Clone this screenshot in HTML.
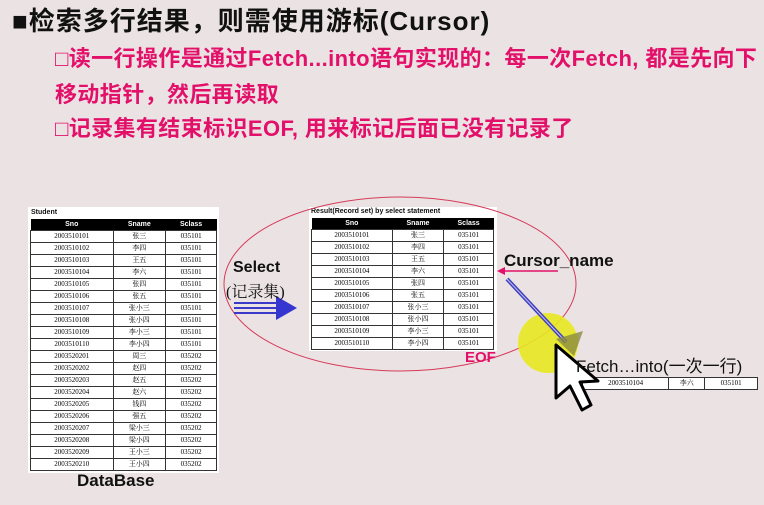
<!DOCTYPE html>
<html><head><meta charset="utf-8"><style>
body{margin:0;width:764px;height:505px;overflow:hidden;background:#ebe3e3;font-family:"Liberation Sans","Noto Sans CJK SC",sans-serif;position:relative}
.a{position:absolute;white-space:nowrap}
.r{color:#e3106a;font-weight:bold;font-size:22px;line-height:26px;letter-spacing:0.4px}
table{border-collapse:collapse;background:#fff;position:absolute;font-family:"Liberation Serif","Noto Serif CJK SC",serif;font-size:7px;text-align:center}
td{border:1px solid #333;padding:0;height:11px;line-height:11px}
th{background:#000;color:#fff;font-family:"Liberation Sans",sans-serif;font-size:7px;height:11px;padding:0}
.cap{position:absolute;font-size:7px;font-weight:bold;color:#111}
</style></head><body>
<div class="a" style="left:12px;top:5px;font-size:26px;line-height:32px;letter-spacing:1px;font-weight:bold;color:#111">■检索多行结果，则需使用游标(Cursor)</div>
<div class="a r" style="left:55px;top:46px">□读一行操作是通过Fetch...into语句实现的：每一次Fetch, 都是先向下</div>
<div class="a r" style="left:55px;top:82px">移动指针，然后再读取</div>
<div class="a r" style="left:55px;top:116px">□记录集有结束标识EOF, 用来标记后面已没有记录了</div>

<div style="position:absolute;left:28px;top:207px;width:191px;height:266px;background:#fff"></div>
<div class="cap" style="left:31px;top:209px">Student</div>
<table style="left:30px;top:219px;width:187px">
<tr><th>Sno</th><th>Sname</th><th>Sclass</th></tr>
<tr><td>2003510101</td><td>张三</td><td>035101</td></tr>
<tr><td>2003510102</td><td>李四</td><td>035101</td></tr>
<tr><td>2003510103</td><td>王五</td><td>035101</td></tr>
<tr><td>2003510104</td><td>李六</td><td>035101</td></tr>
<tr><td>2003510105</td><td>张四</td><td>035101</td></tr>
<tr><td>2003510106</td><td>张五</td><td>035101</td></tr>
<tr><td>2003510107</td><td>张小三</td><td>035101</td></tr>
<tr><td>2003510108</td><td>张小四</td><td>035101</td></tr>
<tr><td>2003510109</td><td>李小三</td><td>035101</td></tr>
<tr><td>2003510110</td><td>李小四</td><td>035101</td></tr>
<tr><td>2003520201</td><td>周三</td><td>035202</td></tr>
<tr><td>2003520202</td><td>赵四</td><td>035202</td></tr>
<tr><td>2003520203</td><td>赵五</td><td>035202</td></tr>
<tr><td>2003520204</td><td>赵六</td><td>035202</td></tr>
<tr><td>2003520205</td><td>钱四</td><td>035202</td></tr>
<tr><td>2003520206</td><td>强五</td><td>035202</td></tr>
<tr><td>2003520207</td><td>梁小三</td><td>035202</td></tr>
<tr><td>2003520208</td><td>梁小四</td><td>035202</td></tr>
<tr><td>2003520209</td><td>王小三</td><td>035202</td></tr>
<tr><td>2003520210</td><td>王小四</td><td>035202</td></tr>
</table>
<div class="a" style="left:77px;top:471px;font-size:17px;font-weight:bold;color:#111">DataBase</div>

<div style="position:absolute;left:309px;top:207px;width:188px;height:144px;background:#fff"></div>
<div class="cap" style="left:311px;top:208px">Result(Record set) by select statement</div>
<table style="left:311px;top:218px;width:183px">
<tr><th>Sno</th><th>Sname</th><th>Sclass</th></tr>
<tr><td>2003510101</td><td>张三</td><td>035101</td></tr>
<tr><td>2003510102</td><td>李四</td><td>035101</td></tr>
<tr><td>2003510103</td><td>王五</td><td>035101</td></tr>
<tr><td>2003510104</td><td>李六</td><td>035101</td></tr>
<tr><td>2003510105</td><td>张四</td><td>035101</td></tr>
<tr><td>2003510106</td><td>张五</td><td>035101</td></tr>
<tr><td>2003510107</td><td>张小三</td><td>035101</td></tr>
<tr><td>2003510108</td><td>张小四</td><td>035101</td></tr>
<tr><td>2003510109</td><td>李小三</td><td>035101</td></tr>
<tr><td>2003510110</td><td>李小四</td><td>035101</td></tr>
</table>
<table style="left:582px;top:377px;width:176px">
<tr><td>2003510104</td><td>李六</td><td>035101</td></tr>
</table>

<svg width="764" height="505" style="position:absolute;left:0;top:0">
<ellipse cx="400" cy="284" rx="176" ry="87" fill="none" stroke="#d63a5a" stroke-width="1"/>
<line x1="234" y1="303" x2="278" y2="303" stroke="#3a3ac8" stroke-width="2"/>
<line x1="234" y1="308" x2="278" y2="308" stroke="#3a3ac8" stroke-width="2"/>
<line x1="234" y1="313" x2="278" y2="313" stroke="#3a3ac8" stroke-width="2"/>
<polygon points="276,296 297,308 276,320" fill="#3535d0"/>
<line x1="558" y1="271" x2="502" y2="271" stroke="#e3106a" stroke-width="1.5"/>
<polygon points="497,271 505,267 505,275" fill="#e3106a"/>
<circle cx="548" cy="343" r="30" fill="#e8e820" opacity="0.9"/>
<line x1="507" y1="279" x2="566" y2="342" stroke="#4040c0" stroke-width="4"/>
<line x1="507" y1="279" x2="566" y2="342" stroke="#c8c8f0" stroke-width="1"/>
<polygon points="556,339 583,331 574,356" fill="#8a8a40" opacity="0.8"/>
<polygon points="556,345 556,398 570,386 582,410 591,405 580,382 598,381" fill="#fff" stroke="#000" stroke-width="3" stroke-linejoin="round"/>
</svg>
<div class="a" style="left:233px;top:259px;font-size:16px;font-weight:bold;color:#111">Select</div>
<div class="a" style="left:226px;top:279px;font-size:16px;color:#111;font-family:'Liberation Serif','Noto Serif CJK SC',serif">(记录集)</div>
<div class="a" style="left:504px;top:251px;font-size:17px;font-weight:bold;color:#111">Cursor_name</div>
<div class="a" style="left:465px;top:349px;font-size:15px;font-weight:bold;color:#e3106a">EOF</div>
<div class="a" style="left:576px;top:352px;font-size:17px;color:#111">Fetch…into(一次一行)</div>
</body></html>
